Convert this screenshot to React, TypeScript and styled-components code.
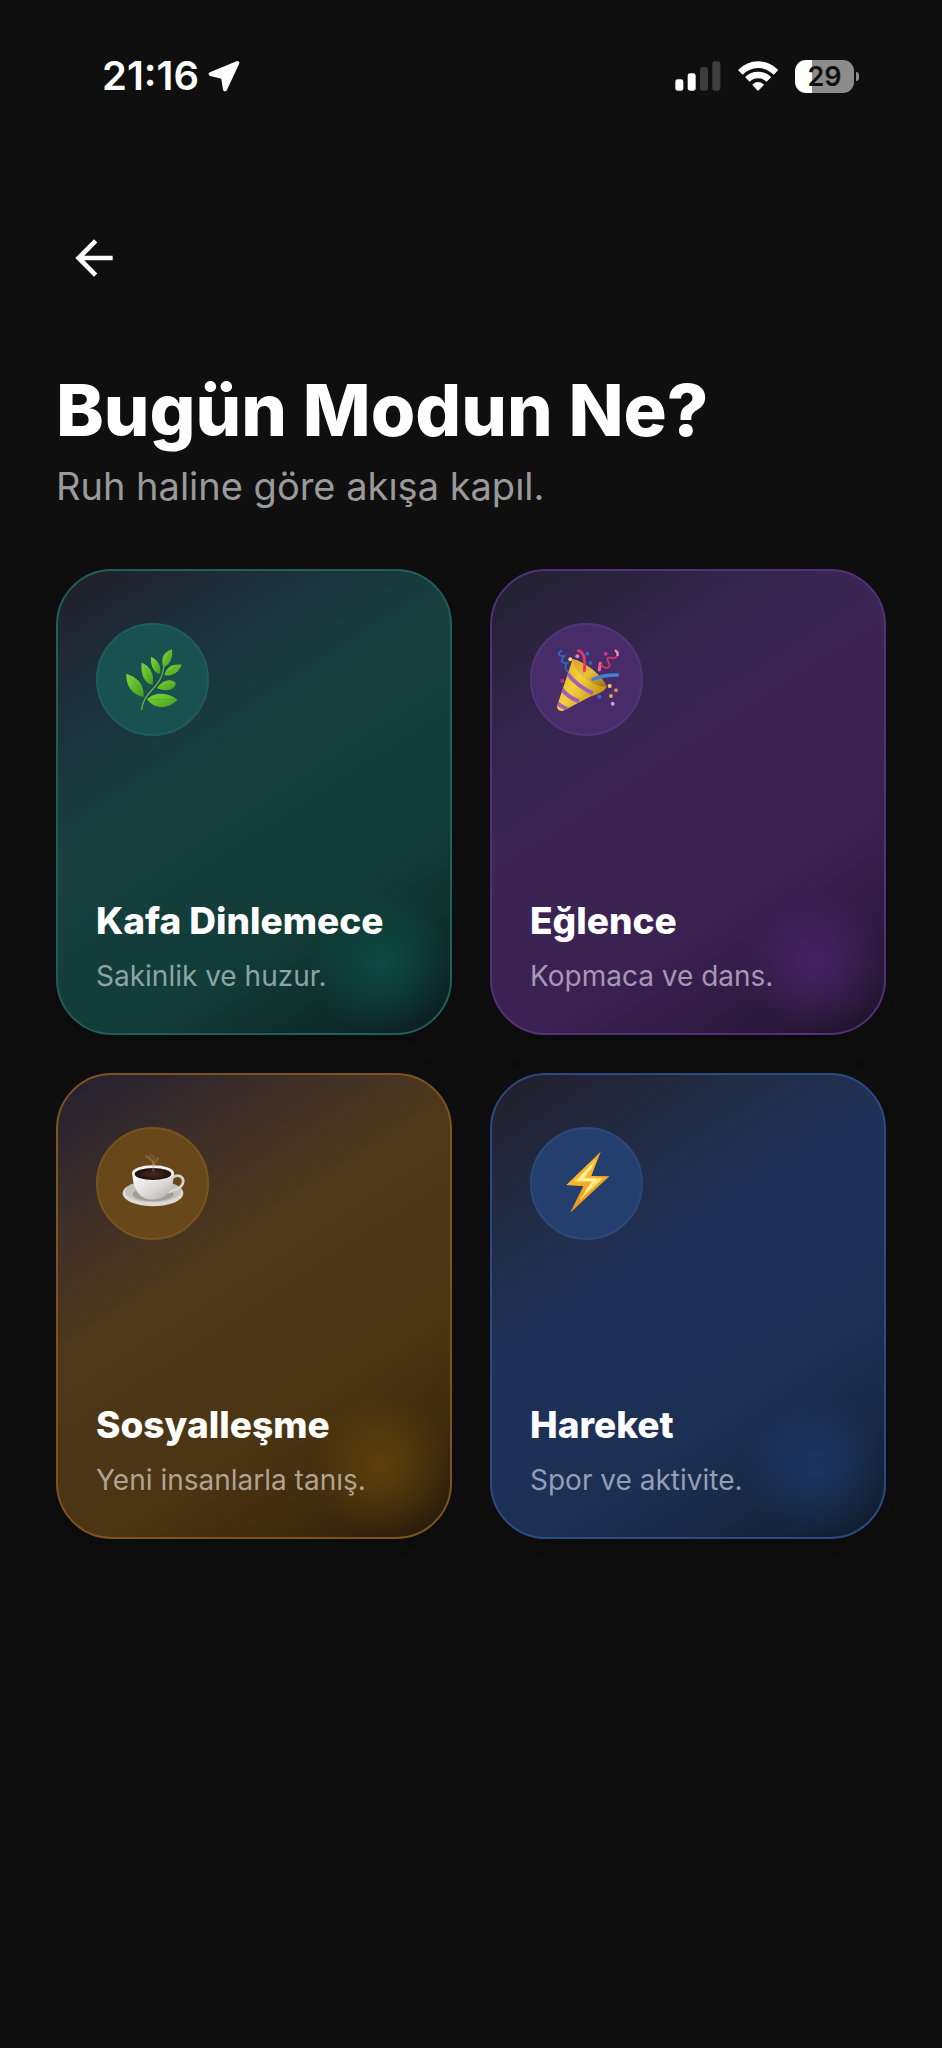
import React from "react";
import styled, { createGlobalStyle } from "styled-components";
import { MdArrowBack } from "react-icons/md";

interface Mood {
  id: string;
  title: string;
  subtitle: string;
  icon: React.ReactNode;
  base: string;
  border: string;
  badge: string;
  badgeBorder: string;
  glow: string;
  muted: string;
}

const GlobalStyle = createGlobalStyle`
  * {
    box-sizing: border-box;
  }

  body {
    margin: 0;
    background-color: #0f0f0f;
    color: #fff;
    font-family: Inter, "Liberation Sans", sans-serif;
  }
`;

const Page = styled.div`
  min-height: 100vh;
  background-color: #0f0f0f;
`;

const StatusBar = styled.header`
  display: flex;
  justify-content: space-between;
  align-items: center;
  height: 152px;
  padding: 0 83px 0 102px;
`;

const Clock = styled.div`
  display: flex;
  align-items: center;
  gap: 9px;
  font-size: 40px;
  line-height: 48px;
  font-weight: 600;
`;

const Indicators = styled.div`
  display: flex;
  align-items: center;
  gap: 17px;
`;

const BatteryWrap = styled.div`
  display: flex;
  align-items: center;
  gap: 2px;
`;

const BatteryBody = styled.div<{ level: number }>`
  width: 59px;
  height: 33px;
  border-radius: 11px;
  background: linear-gradient(
    90deg,
    #fff ${(p) => p.level}%,
    #8c8c8c ${(p) => p.level}%
  );
  color: #0f0f0f;
  font-size: 27px;
  line-height: 33px;
  font-weight: 600;
  text-align: center;
`;

const BatteryTip = styled.div`
  width: 3px;
  height: 9px;
  border-radius: 0 4px 4px 0;
  background-color: #8c8c8c;
`;

const Main = styled.main`
  padding: 68px 56px 56px;
`;

const BackBtn = styled.button`
  display: flex;
  padding: 10px;
  border: none;
  background-color: transparent;
  color: #fff;
  cursor: pointer;
`;

const Title = styled.h1`
  margin: 72px 0 10px;
  font-size: 72px;
  line-height: 84px;
  font-weight: 800;
`;

const Subtitle = styled.p`
  margin: 0 0 59px;
  color: #9a9a9a;
  font-size: 38px;
  line-height: 48px;
  font-weight: 400;
`;

const Grid = styled.div`
  display: grid;
  grid-template-columns: 1fr 1fr;
  gap: 38px;
`;

const Card = styled.button<{ base: string; edge: string; glow: string }>`
  display: flex;
  flex-direction: column;
  align-items: flex-start;
  aspect-ratio: 0.85;
  padding: 52px 38px 39px;
  border: 2px solid ${(p) => p.edge};
  border-radius: 56px;
  background:
    radial-gradient(
      circle 72px at calc(100% - 71px) calc(100% - 74px),
      ${(p) => p.glow},
      transparent
    ),
    linear-gradient(147deg, ${(p) => p.base});
  background-origin: border-box;
  box-shadow: 0 10px 30px rgba(0, 0, 0, 0.3);
  color: #fff;
  font-family: inherit;
  text-align: left;
  cursor: pointer;
`;

const Badge = styled.span<{ fill: string; edge: string }>`
  display: flex;
  justify-content: center;
  align-items: center;
  width: 113px;
  height: 113px;
  margin-bottom: auto;
  border: 2px solid ${(p) => p.edge};
  border-radius: 50%;
  background-color: ${(p) => p.fill};
`;

const CardTitle = styled.span`
  font-size: 37px;
  line-height: 44px;
  font-weight: 800;
`;

const CardText = styled.span<{ tint: string }>`
  margin-top: 15px;
  color: ${(p) => p.tint};
  font-size: 28px;
  line-height: 36px;
  font-weight: 400;
`;

const LocationIcon = () => (
  <svg width="32" height="32" viewBox="386 63 96 96" aria-hidden="true">
    <path
      d="M474 72 L394 105 L431 114 L437 151 Z"
      fill="#fff"
      stroke="#fff"
      strokeWidth="12"
      strokeLinejoin="round"
    />
  </svg>
);

const SignalIcon = () => (
  <svg width="46" height="30" viewBox="76 64 138 90" aria-hidden="true">
    <rect x="77" y="119" width="24" height="34" rx="7" fill="#fff" />
    <rect x="114" y="101" width="24" height="52" rx="7" fill="#fff" />
    <rect x="151" y="83" width="24" height="70" rx="7" fill="#3e3e3e" />
    <rect x="188" y="65" width="24" height="88" rx="7" fill="#3e3e3e" />
  </svg>
);

const WifiIcon = () => (
  <svg width="40" height="30" viewBox="263 64 120 90" aria-hidden="true">
    <g fill="none" stroke="#fff" strokeWidth="20">
      <path d="M270 98 Q294 75 323 75 Q353 75 377 98" />
      <path d="M291 119 Q305 106 323 106 Q342 106 356 119" />
    </g>
    <path
      d="M307 135 Q323 121 340 135 L325 151 Q323 153 321 151 Z"
      fill="#fff"
      stroke="#fff"
      strokeWidth="2"
      strokeLinejoin="round"
    />
  </svg>
);

const HerbIcon = () => (
  <svg width="66" height="66" viewBox="89 94 198 198" aria-hidden="true">
    <defs>
      <linearGradient id="leaf" x1="0" y1="0" x2="1" y2="1">
        <stop offset="0" stopColor="#84d63a" />
        <stop offset="0.5" stopColor="#62bd2c" />
        <stop offset="1" stopColor="#45991f" />
      </linearGradient>
    </defs>
    <g fill="url(#leaf)">
      <path d="M108 174 C140 184 162 205 160 244 C128 236 106 215 108 174 Z" />
      <path d="M154 141 C180 152 192 172 187 207 C162 203 150 176 154 141 Z" />
      <path d="M182 123 C204 134 214 150 209 175 C189 170 180 150 182 123 Z" />
      <path d="M245 101 C218 110 211 128 219 155 C240 146 248 128 245 101 Z" />
      <path d="M274 147 C245 145 229 153 222 179 C248 182 265 170 274 147 Z" />
      <path d="M200 218 C215 193 243 187 256 202 C256 222 228 230 200 218 Z" />
      <path d="M170 251 C190 230 230 227 261 252 C235 280 195 284 170 251 Z" />
    </g>
    <path
      d="M154 282 C156 248 180 230 199 207 C215 187 219 170 221 151"
      fill="none"
      stroke="#69b04a"
      strokeWidth="4"
      strokeLinecap="round"
    />
    <g fill="none" stroke="#4a9c22" strokeWidth="2" opacity="0.6">
      <path d="M114 182 Q142 207 157 239" />
      <path d="M159 149 Q175 175 184 202" />
      <path d="M241 108 Q228 128 221 150" />
      <path d="M268 150 Q243 160 226 176" />
      <path d="M208 216 Q232 204 252 206" />
      <path d="M178 252 Q215 250 252 252" />
    </g>
  </svg>
);

const PartyIcon = () => (
  <svg width="66" height="66" viewBox="99 94 198 198" aria-hidden="true">
    <defs>
      <linearGradient id="cone" x1="0" y1="0" x2="1" y2="0.7">
        <stop offset="0" stopColor="#d9a51c" />
        <stop offset="0.5" stopColor="#f3d13b" />
        <stop offset="1" stopColor="#b9840f" />
      </linearGradient>
      <linearGradient id="mouth" x1="0" y1="0" x2="1" y2="1">
        <stop offset="0" stopColor="#d9a32a" />
        <stop offset="0.5" stopColor="#e9bf3c" />
        <stop offset="1" stopColor="#9a6a10" />
      </linearGradient>
      <clipPath id="coneClip">
        <path d="M155 130 C185 136 245 180 257 213 C252 226 225 238 207 243 L127 285 C116 289 105 279 109 269 Z" />
      </clipPath>
    </defs>
    <g clipPath="url(#coneClip)">
      <rect x="100" y="120" width="165" height="170" fill="url(#cone)" />
      <g fill="none" stroke="#a25fb8" strokeWidth="12">
        <path d="M140 174 Q168 212 216 233" />
        <path d="M122 220 Q142 246 174 257" />
        <path d="M104 258 Q118 272 138 280" />
      </g>
    </g>
    <path
      d="M155 132 C190 136 243 178 256 210 C246 218 222 210 198 191 C174 174 156 152 155 132 Z"
      fill="url(#mouth)"
    />
    <g fill="none" strokeLinecap="round">
      <path d="M172 105 C192 110 193 138 190 165" stroke="#e23b62" strokeWidth="9" />
      <path d="M216 191 Q250 177 290 178" stroke="#4180d2" strokeWidth="10" />
      <path d="M122 105 C108 112 111 122 131 121 C119 132 117 143 139 142 C130 149 132 160 140 168" stroke="#2c6bc4" strokeWidth="5" />
      <path d="M235 163 L238 143" stroke="#ee6493" strokeWidth="9" />
      <path d="M240 146 C246 158 260 160 266 151 C268 143 258 140 259 128 C268 119 278 136 287 122 C292 113 286 107 284 105" stroke="#dc315f" strokeWidth="5" />
      <path d="M290 118 Q291 109 284 105" stroke="#f08fb0" strokeWidth="7" />
    </g>
    <g>
      <circle cx="148" cy="131" r="6" fill="#f6dc77" />
      <circle cx="169" cy="122" r="6" fill="#e47bbb" />
      <circle cx="199" cy="114" r="6" fill="#2e69bd" />
      <circle cx="208" cy="142" r="6" fill="#2e69bd" />
      <circle cx="254" cy="114" r="6" fill="#bc3b86" />
      <circle cx="124" cy="196" r="6" fill="#c13471" />
      <circle cx="235" cy="243" r="6" fill="#2e6dcc" />
      <circle cx="266" cy="211" r="6" fill="#f5d07b" />
      <circle cx="285" cy="224" r="6" fill="#d88858" />
      <circle cx="270" cy="241" r="6" fill="#dca14e" />
      <circle cx="275" cy="264" r="6" fill="#e48ade" />
    </g>
  </svg>
);

const CoffeeIcon = () => (
  <svg width="66" height="66" viewBox="89 96 198 198" aria-hidden="true">
    <defs>
      <linearGradient id="cup" x1="0" y1="0" x2="1" y2="1">
        <stop offset="0" stopColor="#ffffff" />
        <stop offset="0.6" stopColor="#d8d5d2" />
        <stop offset="1" stopColor="#a9a5a1" />
      </linearGradient>
      <radialGradient id="brew">
        <stop offset="0" stopColor="#4a2a20" />
        <stop offset="1" stopColor="#1f0f0b" />
      </radialGradient>
    </defs>
    <ellipse cx="188" cy="226" rx="91" ry="39" fill="#dedbd7" />
    <ellipse cx="188" cy="221" rx="84" ry="32" fill="#c4c1bd" />
    <ellipse cx="188" cy="229" rx="61" ry="21" fill="#a19d98" />
    <path
      d="M246 178 C268 165 285 180 276 199 C268 215 251 216 235 222"
      fill="none"
      stroke="#d6d3d0"
      strokeWidth="8"
      strokeLinecap="round"
    />
    <path
      d="M126 166 C128 206 140 245 188 245 C235 245 249 207 251 166 Z"
      fill="url(#cup)"
    />
    <ellipse cx="188" cy="165" rx="63" ry="23" fill="#f4f2f0" />
    <ellipse cx="188" cy="168" rx="55" ry="18" fill="url(#brew)" />
    <g fill="none" stroke="#c9b89b" strokeLinecap="round">
      <path d="M189 158 C188 146 192 140 186 130 C180 120 172 124 168 113" strokeWidth="6" opacity="0.25" />
      <path d="M189 150 C187 138 196 134 203 121" strokeWidth="6" opacity="0.25" />
      <path d="M189 140 C184 128 196 124 188 113 C182 108 176 114 180 120" strokeWidth="3" opacity="0.3" />
    </g>
  </svg>
);

const BoltIcon = () => (
  <svg width="66" height="66" viewBox="99 96 198 198" aria-hidden="true">
    <defs>
      <linearGradient id="bolt" x1="0" y1="0" x2="0.3" y2="1">
        <stop offset="0" stopColor="#f2a52a" />
        <stop offset="0.5" stopColor="#fbb52c" />
        <stop offset="1" stopColor="#e08d1c" />
      </linearGradient>
    </defs>
    <path
      d="M239 101 L136 201 L187 205 L147 285 L265 175 L211 174 Z"
      fill="url(#bolt)"
    />
    <path
      d="M224 126 L162 190 L214 190 L178 244 L244 182 L190 180 Z"
      fill="#ffe367"
      stroke="#ffd54a"
      strokeWidth="3"
      strokeLinejoin="round"
    />
    <path
      d="M213 144 L176 184 L222 186 L194 222"
      fill="none"
      stroke="#fff6b5"
      strokeWidth="6"
    />
  </svg>
);

const moods: Mood[] = [
  {
    id: "calm",
    title: "Kafa Dinlemece",
    subtitle: "Sakinlik ve huzur.",
    icon: <HerbIcon />,
    base: "#21212d 4%, #1b323a 22%, #17403f 40%, #123c38 70%, #0e302d 84%, #0c1c20 99%",
    border: "#1f5f58",
    badge: "#195150",
    badgeBorder: "#205a59",
    glow: "#0d4a43",
    muted: "#8ca4a3",
  },
  {
    id: "fun",
    title: "Eğlence",
    subtitle: "Kopmaca ve dans.",
    icon: <PartyIcon />,
    base: "#232232 4%, #31244a 22%, #3c2656 40%, #3a2051 70%, #2e1b41 84%, #1f132b 99%",
    border: "#52307a",
    badge: "#472c69",
    badgeBorder: "#523577",
    glow: "#442363",
    muted: "#a698b4",
  },
  {
    id: "social",
    title: "Sosyalleşme",
    subtitle: "Yeni insanlarla tanış.",
    icon: <CoffeeIcon />,
    base: "#272230 4%, #3e2f28 22%, #4f3819 40%, #4b3412 70%, #3f2a0c 84%, #271b0b 99%",
    border: "#7c5420",
    badge: "#68481b",
    badgeBorder: "#78531f",
    glow: "#5e400b",
    muted: "#b0a393",
  },
  {
    id: "active",
    title: "Hareket",
    subtitle: "Spor ve aktivite.",
    icon: <BoltIcon />,
    base: "#23212e 4%, #212b45 22%, #1f3157 40%, #1b2f53 70%, #172844 84%, #101c2d 99%",
    border: "#2b4a82",
    badge: "#243e6d",
    badgeBorder: "#2d4879",
    glow: "#1b3561",
    muted: "#939fb4",
  },
];

const App = () => {
  return (
    <>
      <GlobalStyle />
      <Page>
        <StatusBar>
          <Clock>
            21:16
            <LocationIcon />
          </Clock>
          <Indicators>
            <SignalIcon />
            <WifiIcon />
            <BatteryWrap>
              <BatteryBody level={29}>29</BatteryBody>
              <BatteryTip />
            </BatteryWrap>
          </Indicators>
        </StatusBar>
        <Main>
          <BackBtn aria-label="Geri">
            <MdArrowBack size={56} />
          </BackBtn>
          <Title>Bugün Modun Ne?</Title>
          <Subtitle>Ruh haline göre akışa kapıl.</Subtitle>
          <Grid>
            {moods.map((mood) => (
              <Card
                key={mood.id}
                base={mood.base}
                edge={mood.border}
                glow={mood.glow}
              >
                <Badge fill={mood.badge} edge={mood.badgeBorder}>
                  {mood.icon}
                </Badge>
                <CardTitle>{mood.title}</CardTitle>
                <CardText tint={mood.muted}>{mood.subtitle}</CardText>
              </Card>
            ))}
          </Grid>
        </Main>
      </Page>
    </>
  );
};

export default App;
